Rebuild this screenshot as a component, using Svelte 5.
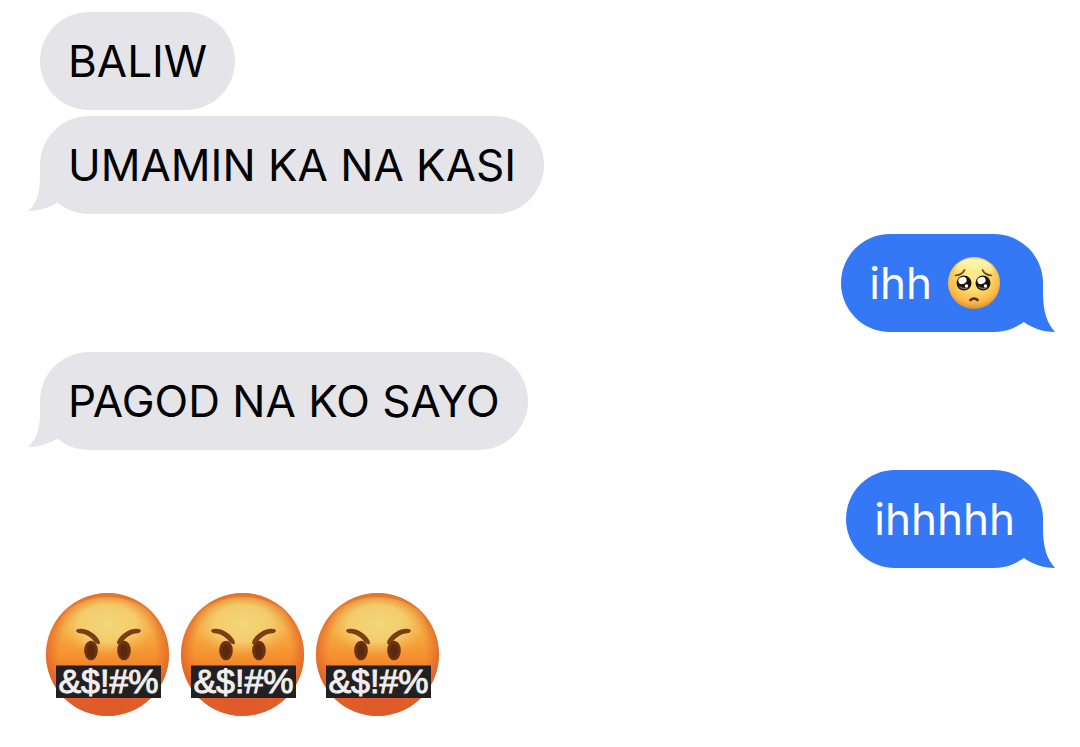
<script lang="ts">
	type Message = {
		from: 'them' | 'me';
		text: string;
		emoji?: boolean;
		tail?: boolean;
	};

	const messages: Message[] = [
		{ from: 'them', text: 'BALIW' },
		{ from: 'them', text: 'UMAMIN KA NA KASI', tail: true },
		{ from: 'me', text: 'ihh', emoji: true, tail: true },
		{ from: 'them', text: 'PAGOD NA KO SAYO', tail: true },
		{ from: 'me', text: 'ihhhhh', tail: true }
	];

	const reactions = [1, 2, 3];
</script>

<svelte:head>
	<title>Messages</title>
</svelte:head>

<!-- Gradients shared by every emoji -->
<svg class="defs" width="0" height="0" aria-hidden="true">
	<defs>
		<radialGradient id="plead-face" cx="0.5" cy="0.36" r="0.66">
			<stop offset="0" stop-color="#ffec86" />
			<stop offset="0.45" stop-color="#fddc6b" />
			<stop offset="0.8" stop-color="#f9b545" />
			<stop offset="1" stop-color="#d4862c" />
		</radialGradient>
		<linearGradient id="plead-shine" x1="0" y1="0" x2="0" y2="1">
			<stop offset="0" stop-color="#fffbc4" />
			<stop offset="1" stop-color="#fff08f" stop-opacity="0" />
		</linearGradient>
		<linearGradient id="rage-face" x1="0" y1="0" x2="0" y2="1">
			<stop offset="0" stop-color="#ed9b35" />
			<stop offset="0.3" stop-color="#f6ad42" />
			<stop offset="0.55" stop-color="#f48b2c" />
			<stop offset="0.78" stop-color="#e4602b" />
			<stop offset="1" stop-color="#d9512a" />
		</linearGradient>
		<radialGradient id="rage-edge" cx="0.5" cy="0.5" r="0.5">
			<stop offset="0.78" stop-color="#e8682a" stop-opacity="0" />
			<stop offset="1" stop-color="#df6029" stop-opacity="0.75" />
		</radialGradient>
		<radialGradient id="rage-shine" cx="0.5" cy="0.42" r="0.58">
			<stop offset="0" stop-color="#f4d678" />
			<stop offset="0.5" stop-color="#f3d071" stop-opacity="0.9" />
			<stop offset="0.85" stop-color="#f3b852" stop-opacity="0.1" />
			<stop offset="1" stop-color="#f3b852" stop-opacity="0" />
		</radialGradient>
	</defs>
</svg>

<main class="chat">
	{#each messages as msg}
		<div class="bubble {msg.from}">
			<span>{msg.text}</span>
			{#if msg.emoji}
				<svg class="emoji" viewBox="0 0 52 52" role="img" aria-label="Pleading face">
					<circle cx="26" cy="26" r="26" fill="url(#plead-face)" />
					<ellipse cx="26" cy="13" rx="19" ry="11" fill="url(#plead-shine)" />
					<g fill="#1c100a">
						<circle cx="16" cy="26" r="7.500" />
						<circle cx="35" cy="26" r="7.500" />
					</g>
					<g fill="#70685c">
						<path d="M10.500 28.500a6 6 0 0 0 10 2q-5 1.500-10-2zM29.500 28.500a6 6 0 0 0 10 2q-5 1.500-10-2z" />
					</g>
					<g fill="#fff">
						<ellipse cx="14.500" cy="23.500" rx="4.200" ry="3.400" transform="rotate(-20 14.500 23.500)" />
						<ellipse cx="33.500" cy="23.500" rx="4.200" ry="3.400" transform="rotate(-20 33.500 23.500)" />
						<circle cx="18.500" cy="29" r="1.700" />
						<circle cx="37.500" cy="29" r="1.700" />
					</g>
					<g fill="none" stroke="#75461c" stroke-width="1.700" stroke-linecap="round">
						<path d="M7.500 18.500Q14 18 16.500 13" />
						<path d="M34.500 13Q37 18 43.500 18.500" />
					</g>
					<path d="M22.500 43q3.500-3 7 0" fill="none" stroke="#5c2410" stroke-width="2.600" stroke-linecap="round" />
				</svg>
			{/if}
			{#if msg.tail}
				<svg class="bubble-tail" viewBox="0 0 34 52" aria-hidden="true">
					{#if msg.from === 'them'}
						<path d="M12 0V12C12 29 10 40 0 49C10 49 20 46 29 41L34 30V0Z" fill="currentColor" />
					{:else}
						<path d="M22 0V12C22 32 26 43 34 52C22 52 11 48 3 42L0 30V0Z" fill="currentColor" />
					{/if}
				</svg>
			{/if}
		</div>
	{/each}

	<div class="reactions">
		{#each reactions as id (id)}
			<svg class="big-emoji" viewBox="0 0 123 123" role="img" aria-label="Face with symbols on mouth">
				<circle cx="61.500" cy="61.500" r="61.500" fill="url(#rage-face)" />
				<circle cx="61.500" cy="61.500" r="61.500" fill="url(#rage-edge)" />
				<ellipse cx="61.500" cy="36" rx="50" ry="32" fill="url(#rage-shine)" />
				<g fill="#6b3010">
					<ellipse cx="45" cy="57.500" rx="6.800" ry="9.800" />
					<ellipse cx="78" cy="57.500" rx="6.800" ry="9.800" />
				</g>
				<g fill="#5a280c">
					<ellipse cx="45" cy="58" rx="3.500" ry="6.500" />
					<ellipse cx="78" cy="58" rx="3.500" ry="6.500" />
				</g>
				<g fill="#7a3d14">
					<path d="M30 38C30 35 39 35 45 39C50 42 54 47 54 50C53 53 49 50 46 46C42 42 37 40 32 40Z" />
					<path d="M95 38C95 35 86 35 80 39C75 42 71 47 71 50C72 53 76 50 79 46C83 42 88 40 93 40Z" />
				</g>
				<rect x="10" y="72.500" width="105" height="32.500" fill="#232021" />
				<text x="62.500" y="100" text-anchor="middle" class="symbols">&amp;$!#%</text>
			</svg>
		{/each}
	</div>
</main>

<style>
	:global(body) {
		margin: 0;
		background: #fff;
	}

	.defs {
		position: absolute;
	}

	.chat {
		display: flex;
		flex-direction: column;
		align-items: flex-start;
		gap: 20px;
		padding: 12px 37px 24px 40px;
		font-family: Inter, 'Liberation Sans', sans-serif;
		font-size: 44px;
		line-height: 54px;
	}

	.bubble {
		position: relative;
		display: flex;
		align-items: center;
		gap: 16px;
		padding: 22px 28px;
		border-radius: 49px;
	}

	.them {
		background: #e5e4e9;
		color: #000;
	}

	.me {
		align-self: flex-end;
		background: #3478f6;
		color: #fff;
	}

	/* Bubbles from the same sender sit closer together */
	.them + .them {
		margin-top: -14px;
	}

	.emoji {
		width: 52px;
		height: 52px;
		margin-right: 15px;
	}

	.bubble-tail {
		position: absolute;
		bottom: 0;
		width: 34px;
		height: 52px;
	}

	.them .bubble-tail {
		left: -12px;
		color: #e5e4e9;
	}

	.me .bubble-tail {
		right: -12px;
		color: #3478f6;
	}

	.reactions {
		display: flex;
		gap: 12px;
		padding: 5px 6px;
	}

	.big-emoji {
		width: 123px;
		height: 123px;
	}

	.symbols {
		font-family: 'Liberation Sans', Arial, sans-serif;
		font-size: 34px;
		fill: #f0eeee;
		stroke: #f0eeee;
		stroke-width: 1px;
	}
</style>
